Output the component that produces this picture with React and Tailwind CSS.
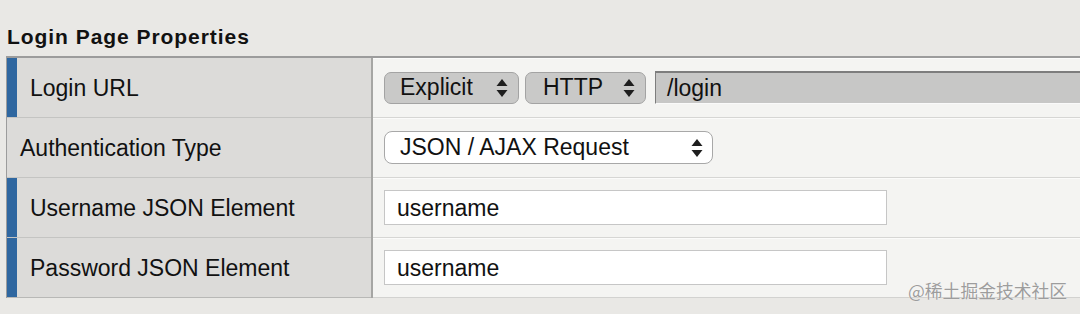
import React from "react";

const font = { fontFamily: '"Liberation Sans", Arial, Helvetica, sans-serif' };

function Arrows() {
  return (
    <svg width="12" height="18" viewBox="0 0 12 18" className="shrink-0">
      <path d="M6 0 L11.5 7 L0.5 7 Z" fill="#1e1e1e" />
      <path d="M0.5 11 L11.5 11 L6 18 Z" fill="#1e1e1e" />
    </svg>
  );
}

function GraySelect({ label, width, pl }) {
  return (
    <div
      className={`flex items-center justify-between h-[32px] rounded-[7px] border border-[#a3a3a3] bg-[#c9c9c8] pr-[10px] ${width} ${pl}`}
    >
      <span className="text-[23px] text-[#111] leading-none">{label}</span>
      <Arrows />
    </div>
  );
}

function LabelCell({ text, bar, last }) {
  return (
    <div
      className={`flex items-stretch h-[60px] bg-[#dcdbd9] ${last ? "border-b border-[#b8b8b6]" : "border-b border-[#c4c4c2]"}`}
    >
      {bar ? <div className="w-[10px] bg-[#2f67a0] shrink-0" /> : null}
      <div className="flex items-center pl-[13px] pt-[1px] text-[23px] text-[#111] leading-none">
        {text}
      </div>
    </div>
  );
}

function ValueCell({ children, last }) {
  return (
    <div
      className={`flex items-center h-[60px] bg-[#f4f4f2] pl-[11px] ${last ? "border-b border-[#d2d2d0]" : "border-b border-[#d6d6d4]"} shadow-[inset_0_1px_0_#fbfbfa]`}
    >
      {children}
    </div>
  );
}

function TextInput({ value }) {
  return (
    <div className="flex items-center w-[503px] h-[35px] bg-white border border-[#c6c6c6] pl-[12px] pt-[1px] text-[23px] text-[#111] leading-none">
      {value}
    </div>
  );
}

export default function App() {
  return (
    <div className="relative w-[1080px] h-[314px] overflow-hidden bg-[#e9e8e5]" style={font}>
      <div className="pl-[7px] pt-[25px] h-[56px] text-[21px] font-bold leading-[24px] tracking-[0.95px] text-[#111]">
        Login Page Properties
      </div>
      <div className="ml-[6px] border-t-2 border-l border-[#9c9c9c] grid grid-cols-[364px_2px_1fr]">
        <div className="flex flex-col">
          <LabelCell text="Login URL" bar />
          <LabelCell text="Authentication Type" />
          <LabelCell text="Username JSON Element" bar />
          <LabelCell text="Password JSON Element" bar last />
        </div>
        <div className="bg-[#a6a6a4]" />
        <div className="flex flex-col">
          <ValueCell>
            <div className="flex items-center gap-[6px] w-full">
              <GraySelect label="Explicit" width="w-[135px]" pl="pl-[15px]" />
              <GraySelect label="HTTP" width="w-[121px]" pl="pl-[17px]" />
              <div className="ml-[3px] flex-1 flex items-center h-[33px] bg-[#c7c7c6] border-t-2 border-l border-[#7d7d7d] border-b border-b-[#fafafa] pl-[11px] text-[23px] text-[#111] leading-none">
                /login
              </div>
            </div>
          </ValueCell>
          <ValueCell>
            <div className="flex items-center justify-between w-[329px] h-[33px] rounded-[8px] border border-[#a8a8a8] bg-white pl-[15px] pr-[9px]">
              <span className="text-[23px] text-[#111] leading-none">JSON / AJAX Request</span>
              <Arrows />
            </div>
          </ValueCell>
          <ValueCell>
            <TextInput value="username" />
          </ValueCell>
          <ValueCell last>
            <TextInput value="username" />
          </ValueCell>
        </div>
      </div>
      <div
        className="absolute left-[908px] top-[282px] text-[17.8px] leading-none text-[#9d9d9d] [text-shadow:0_0_1px_#ffffff]"
        style={{ fontFamily: '"Noto Sans CJK SC", "Liberation Sans", sans-serif' }}
      >
        @稀土掘金技术社区
      </div>
    </div>
  );
}
